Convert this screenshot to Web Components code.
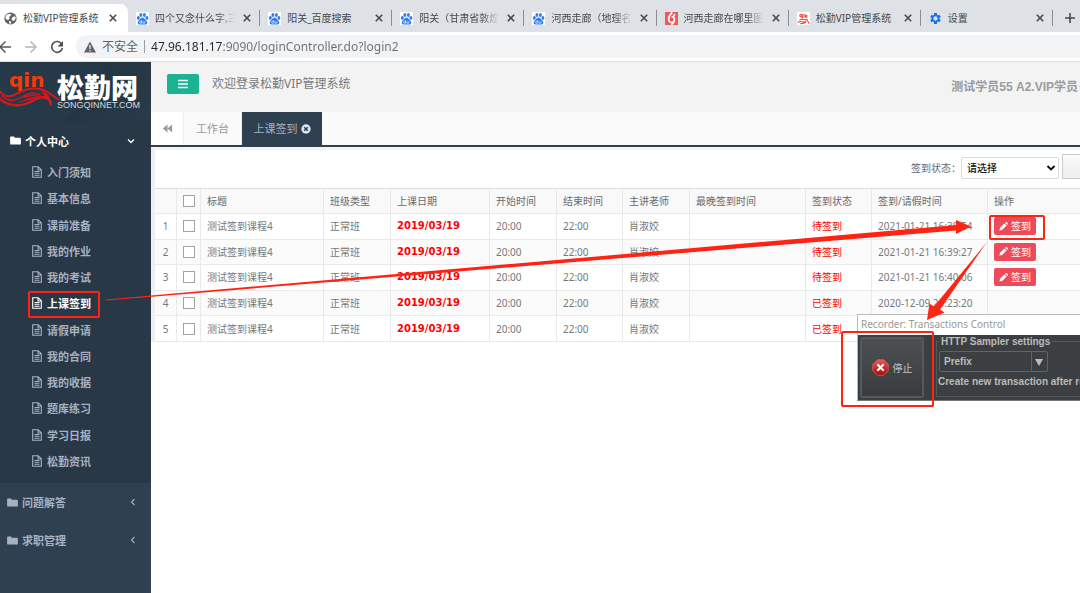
<!DOCTYPE html>
<html lang="zh-CN">
<head>
<meta charset="utf-8">
<title>松勤VIP管理系统</title>
<style>
html,body{margin:0;height:100%}
body{font:10px/16px "Noto Sans","Noto Sans CJK SC",sans-serif;color:#676a6c;background:#fff;overflow:hidden}
</style>
</head>
<body>
<app-shell></app-shell>
<script>
const define=(name,html,setup)=>customElements.define(name,class extends HTMLElement{
  connectedCallback(){
    if(this.shadowRoot)return;
    const root=this.attachShadow({mode:'open'});
    const t=document.createElement('template');
    t.innerHTML=typeof html==='function'?html(this):html;
    root.append(t.content.cloneNode(true));
    if(setup)setup(this,root);
  }
});

const ICONS={
  globe:['0 0 16 16','<circle cx="8" cy="8" r="7.5" fill="#5f6368"/><path d="M3 3.500 7 2l2 1-1 2-2 1 1 2-2 2-2-1-1.500-2zM9.500 7l4-2 1 2.500-1.500 3-2 .5-1.500-1.500zM6 11l3 1-.5 2.500-2-.5z" fill="#fff"/>'],
  paw:['0 0 16 16','<rect width="16" height="16" fill="#fff"/><g fill="#2f7cf6"><ellipse cx="2.900" cy="7.300" rx="1.800" ry="2.300"/><ellipse cx="6" cy="3.600" rx="1.800" ry="2.500"/><ellipse cx="10.300" cy="3.600" rx="1.800" ry="2.500"/><ellipse cx="13.400" cy="7.300" rx="1.800" ry="2.300"/><path d="M8 6.800c-1.800 0-2.400 1.600-3.800 2.900-1.600 1.400-2.400 2.600-1.900 4.200.6 1.900 2.500 1.700 3.700 1.500 1.400-.2 2.600-.2 4 0 1.300.2 3.200.4 3.800-1.500.4-1.600-.4-2.800-2-4.200C10.300 8.400 9.800 6.800 8 6.800z"/></g><path d="M7 10v3.800H5.600a1.100 1.100 0 0 1 0-2.300H7M8.800 11.500v2.300h2v-2.300" fill="none" stroke="#fff" stroke-width=".8"/>'],
  six:['0 0 16 16','<rect width="16" height="16" fill="#ee5a5c"/><path d="M9 .5C6 3 4.500 6 4.500 9a3.600 3.600 0 1 0 3.600-3.400M11.700 9c0 3-1.500 5-4 6.500M12 2.500c-.3 1.500-1 2.500-2 3.500" fill="none" stroke="#fff" stroke-width="2"/>'],
  song:['0 0 16 16','<rect width="16" height="16" fill="#fff"/><g fill="none" stroke="#ee4a34" stroke-width="1.400"><circle cx="5" cy="4.500" r="1.500"/><path d="M6.500 3.500v4.500M8.500 2v5M10.500 7V4h1.500v3M3 10c3-3 6 1 9-1M1 13c4-4 8 2 10-2M4 14.500c3-1 4 0 7-2M12 9l3 5.500"/></g>'],
  gear:['0 0 24 24','<path fill="#1a73e8" d="M19.400 13c.1-.6.1-1.300 0-2l2.300-1.700-2.400-4.100-2.600 1.100a8 8 0 0 0-1.700-1L14.600 2H9.400L9 5.300a8 8 0 0 0-1.700 1L4.700 5.200 2.300 9.300 4.600 11a8 8 0 0 0 0 2l-2.300 1.700 2.400 4.100 2.600-1.100a8 8 0 0 0 1.700 1l.4 3.300h5.200l.4-3.300a8 8 0 0 0 1.700-1l2.600 1.100 2.400-4.100zM12 16a4 4 0 1 1 0-8 4 4 0 0 1 0 8z"/>'],
  close:['0 0 12 12','<path d="m2.800 2.800 6.400 6.400m0-6.400L2.800 9.200" stroke="#45494d" stroke-width="1.600"/>'],
  plus:['0 0 12 12','<path d="M6 1v10M1 6h10" stroke="#45494d" stroke-width="1.600"/>'],
  back:['0 0 14 14','<path d="M13 7H2M7.500 1.500 2 7l5.500 5.500" fill="none" stroke="#55595e" stroke-width="1.500"/>'],
  forward:['0 0 14 14','<path d="M1 7h11M6.500 1.500 12 7l-5.500 5.500" fill="none" stroke="#b4b6b9" stroke-width="1.500"/>'],
  reload:['0 0 14 14','<path d="M11.800 4.200A5.400 5.400 0 1 0 12.400 8" fill="none" stroke="#4d5156" stroke-width="1.600"/><path d="M13 1v5.500H7.500z" fill="#4d5156"/>'],
  warn:['0 0 12 12','<path d="M6 .5 12 11.500H0z" fill="#5f6368"/><path d="M6 4v4M6 9v1.300" stroke="#fff" stroke-width="1.200"/>'],
  folder:['0 0 12 10','<path fill="currentColor" d="M0 1.500Q0 .5 1 .5h3q1 0 1 1V2h5.500Q12 2 12 3.200v5q0 1.300-1.300 1.300H1.300Q0 9.500 0 8.200z"/>'],
  doc:['0 0 10 12','<path d="M.7.7h5.500l3.100 3.100v7.500H.7zM6 .7v3.300h3.300M2.500 5.500h5M2.500 7.300h5M2.500 9.200h5" fill="none" stroke="currentColor" stroke-width="1.100"/>'],
  down:['0 0 8 8','<path d="m1 2.500 3 3 3-3" fill="none" stroke="currentColor" stroke-width="1.300"/>'],
  left:['0 0 8 8','<path d="M5.500 1 2.500 4l3 3" fill="none" stroke="currentColor" stroke-width="1.100"/>'],
  bars:['0 0 12 12','<path d="M1 2.500h10M1 6h10M1 9.500h10" stroke="#fff" stroke-width="1.700"/>'],
  rewind:['0 0 12 10','<path d="M6 .5v9L.8 5zM11.200.5v9L6 5z" fill="#999"/>'],
  dot:['0 0 10 10','<circle cx="5" cy="5" r="4.700" fill="#dfe4ea"/><path d="m3.200 3.200 3.600 3.600m0-3.600L3.200 6.800" stroke="#2f4050" stroke-width="1.500"/>'],
  select:['0 0 10 10','<path d="m1.500 3 3.500 3.500L8.500 3" fill="none" stroke="#111" stroke-width="1.900"/>'],
  pencil:['0 0 10 10','<path d="m.5 9.500.6-3L6 1.600 8.400 4 3.500 8.900zM6.700.9 7.500.3q.5-.4 1 0L9.700 1.500q.4.5 0 1L9.100 3.300z" fill="#fff"/>'],
  stop:['0 0 18 18','<defs><linearGradient id="r" x2="0" y2="1"><stop stop-color="#ee5555"/><stop offset="1" stop-color="#a80808"/></linearGradient></defs><path d="M5.700.8h6.600l4.900 4.900v6.600l-4.900 4.900H5.700L.8 12.300V5.700z" fill="url(#r)" stroke="#d66" stroke-width=".8"/><path d="m5.600 5.600 6.800 6.800m0-6.800-6.800 6.800" stroke="#fff" stroke-width="2.200"/>'],
  logo:['0 0 60 50','<text x="9" y="25" font-family="DejaVu Sans" font-weight="bold" font-size="20" fill="#f23c0a">qin</text><g fill="none" stroke="#d7181b" stroke-linecap="round"><path d="M0 29.500c4 5 8 6 13 4 7-3 11-7 21-7 14 0 16 7 25 11" stroke-width="2"/><path d="M0 37c8 7 19 8 28 4 7-3 10-6 15-6 5 1 8 3 7.500 7.500" stroke-width="2.400"/><path d="M2 34c7 6 13 5 20 1 4-2.500 8-4 13-4M24 35l16-3M25 38l14-4M20 40l14-4" stroke-width="1.300"/><path d="M41 29c5 0 9 4 9.500 12-1.500-3-3-5-5-6" fill="#d7181b" stroke="none"/></g>']
};
define('ui-icon',el=>{
  const [box,body]=ICONS[el.getAttribute('name')];
  const w=el.getAttribute('w')||12,h=el.getAttribute('h')||w;
  return `<style>:host{display:block;flex:none;width:${w}px;height:${h}px}svg{display:block;width:100%;height:100%}</style><svg viewBox="${box}" aria-hidden="true">${body}</svg>`;
});

define('browser-tab',el=>`<style>
:host{display:flex;flex:1 1 132px;box-sizing:border-box;min-width:0;align-items:center;gap:6px;padding:0 7px 0 8px;height:28px;position:relative;color:#45494d}
:host::after{content:"";position:absolute;right:0;top:6px;height:16px;width:1px;background:#8b8e93}
:host([active]){flex:0 1 128px;background:#fff;border-radius:0 8px 0 0;padding:0 9px 0 4px}
:host([active])::after{display:none}
span{flex:1;white-space:nowrap;overflow:hidden;-webkit-mask-image:linear-gradient(90deg,#000 78%,transparent)}
:host([full]) span{-webkit-mask-image:none;overflow:visible}
button{border:0;background:none;padding:0}
</style><ui-icon name="${el.getAttribute('icon')}" w="13"></ui-icon><span><slot></slot></span><button aria-label="关闭标签页"><ui-icon name="close" w="12"></ui-icon></button>`);

define('browser-chrome',`<style>
:host{display:block;background:#fff;border-bottom:1px solid #dfe1e4}
.tabs{display:flex;align-items:end;height:32px;background:#dee1e6}
button{border:0;background:none;padding:0}
.new{align-self:center;margin:4px 4px 0 11px}
.bar{display:flex;align-items:center;height:29px;gap:12px}
.bar>button:first-child{margin-left:-2px}
.url{flex:1;display:flex;align-items:center;gap:6px;height:23px;padding-left:8px;border-radius:12px 0 0 12px;background:#f1f3f4;color:#5f6368;font-size:12px;line-height:18px}
.url i{width:1px;height:13px;background:#9a9da1}
.url span{white-space:nowrap}
input{flex:1;min-width:0;border:0;padding:0;outline:0;font:12px/18px "Noto Sans",sans-serif;height:18px;color:transparent;background:linear-gradient(90deg,#25282c 71px,#6c7075 71px) text;-webkit-background-clip:text}
</style>
<div class="tabs">
<browser-tab active full icon="globe">松勤VIP管理系统</browser-tab>
<browser-tab icon="paw">四个又念什么字,三</browser-tab>
<browser-tab full icon="paw">阳关_百度搜索</browser-tab>
<browser-tab icon="paw">阳关（甘肃省敦煌</browser-tab>
<browser-tab icon="paw">河西走廊（地理名</browser-tab>
<browser-tab icon="six">河西走廊在哪里图</browser-tab>
<browser-tab full icon="song">松勤VIP管理系统</browser-tab>
<browser-tab full icon="gear">设置</browser-tab>
<button class="new" aria-label="新标签页"><ui-icon name="plus" w="12"></ui-icon></button>
</div>
<div class="bar">
<button aria-label="后退"><ui-icon name="back" w="14"></ui-icon></button>
<button aria-label="前进"><ui-icon name="forward" w="14"></ui-icon></button>
<button aria-label="刷新"><ui-icon name="reload" w="14"></ui-icon></button>
<div class="url"><ui-icon name="warn" w="12"></ui-icon><span>不安全</span><i></i><input aria-label="地址" value="47.96.181.17:9090/loginController.do?login2"></div>
</div>`);

define('nav-item',`<style>
:host{display:flex;flex:1;align-items:center;padding-left:32px}
a{display:flex;align-items:center;gap:5px;color:#a7b1c2;text-decoration:none;font:bold 11px/16px "Noto Sans CJK SC",sans-serif}
:host([current]) a{color:#fff}
</style><a href="#"><ui-icon name="doc" w="10" h="12"></ui-icon><slot></slot></a>`);

define('nav-group',el=>`<style>
:host{display:block;color:#a7b1c2}
:host([open]){background:#293846;padding-bottom:9px}
a{display:flex;align-items:center;gap:4px;height:38px;padding:0 14px 0 7px;color:inherit;text-decoration:none;font:bold 11px/16px "Noto Sans CJK SC",sans-serif}
:host([open]) a{color:#fff;height:37px;padding:0 16px 0 10px}
span{flex:1}
.list{display:flex;flex-direction:column;height:315px}
:host(:not([open])) .list{display:none}
</style><a href="#"><ui-icon name="folder" w="11" h="9"></ui-icon><span>${el.getAttribute('label')}</span><ui-icon name="${el.hasAttribute('open')?'down':'left'}" w="8"></ui-icon></a><div class="list"><slot></slot></div>`);

define('side-nav',`<style>
:host{display:block;background:#2f4050}
.logo{display:flex;height:60px;background:linear-gradient(125deg,#263948 55%,#243543 56%,#293b49)}
.name{display:flex;flex-direction:column;color:#fff;padding-top:11px;margin-left:-3px}
b{font:900 27px/27px "Noto Sans CJK SC",sans-serif;white-space:nowrap}
small{font:9px/10px "Liberation Sans",sans-serif;color:#d6dade}
</style>
<div class="logo"><ui-icon name="logo" w="60" h="50"></ui-icon><div class="name"><b>松勤网</b><small>SONGQINNET.COM</small></div></div>
<nav>
<nav-group open label="个人中心">
<nav-item>入门须知</nav-item><nav-item>基本信息</nav-item><nav-item>课前准备</nav-item><nav-item>我的作业</nav-item><nav-item>我的考试</nav-item><nav-item current>上课签到</nav-item><nav-item>请假申请</nav-item><nav-item>我的合同</nav-item><nav-item>我的收据</nav-item><nav-item>题库练习</nav-item><nav-item>学习日报</nav-item><nav-item>松勤资讯</nav-item>
</nav-group>
<nav-group label="问题解答"></nav-group>
<nav-group label="求职管理"></nav-group>
</nav>`);

define('page-header',`<style>
:host{display:flex;height:50px;background:#f3f3f4;padding-left:16px;overflow:hidden}
.menu{margin-top:12px;width:32px;height:20px;border:0;border-radius:2px;background:#1ab394;display:grid;place-items:center;padding:0}
.hi{margin:14px 0 0 13px;flex:1;white-space:nowrap;color:#77797b;font-size:12px}
.user{margin:17px -5px 0 0;display:flex;align-items:center;gap:1px;height:16px;white-space:nowrap;color:#999c9e;text-decoration:none;font:bold 12px/16px "Liberation Sans","Noto Sans CJK SC",sans-serif}
.user i{border:3px solid transparent;border-top-color:#999c9e;border-bottom:0}
</style><button class="menu" aria-label="菜单"><ui-icon name="bars" w="12"></ui-icon></button><span class="hi">欢迎登录松勤VIP管理系统</span><a class="user" href="#">测试学员55 A2.VIP学员<i></i></a>`);

define('page-tabs',`<style>
:host{display:flex;height:33px;background:#fafafa;border-bottom:2px solid #2f4050;font-size:11px}
button,a{box-sizing:border-box;display:flex;align-items:center;justify-content:center;gap:3px;border:0;border-right:1px solid #eee;padding:0;color:#999;text-decoration:none;white-space:nowrap}
button{width:33px;background:#fff}
a{width:58px}
a.on{width:80px;background:#2f4050;color:#a7b1c2;border:0}
</style><button aria-label="向左滚动"><ui-icon name="rewind" w="11" h="9"></ui-icon></button><a href="#">工作台</a><a class="on" href="#">上课签到<ui-icon name="dot" w="10"></ui-icon></a>`);

define('filter-bar',`<style>
:host{display:flex;align-items:start;justify-content:flex-end;height:38px;background:#fff}
label{padding-top:10px}
.pick{position:relative;margin:7px 3px 0 0}
.pick ui-icon{position:absolute;right:3px;top:6px;pointer-events:none}
select{appearance:none;box-sizing:border-box;width:98px;height:22px;padding:0 5px;border:1px solid #ddd;border-radius:2px;background:#fff;color:#111;font:500 10px/16px "Noto Sans CJK SC",sans-serif}
.search{width:18px;height:25px;margin-top:4px;padding:0;border:1px solid #ccc;border-right:0;background:linear-gradient(#fafafa,#eee)}
</style><label for="state">签到状态：</label><div class="pick"><select id="state"><option>请选择</option></select><ui-icon name="select" w="10"></ui-icon></div><button class="search" aria-label="查询"></button>`);

define('sign-button',`<style>:host{display:block}button{display:flex;align-items:center;justify-content:center;gap:3px;width:42px;height:18px;border:0;border-radius:2px;background:#ed4a5c;color:#fff;padding:0;font:10px/16px "Noto Sans CJK SC",sans-serif}</style><button><ui-icon name="pencil" w="9"></ui-icon><slot></slot></button>`);

const ROWS=[['待签到','2021-01-21 16:38:54',1],['待签到','2021-01-21 16:39:27',1],['待签到','2021-01-21 16:40:06',1],['已签到','2020-12-09 20:23:20',0],['已签到','2020-12-09 20:23:20',0]];
define('sign-table',`<style>
:host{display:block}
table{width:100%;height:154px;table-layout:fixed;border-collapse:separate;border-spacing:0;border-top:1px solid #ddd;line-height:16px}
th,td{height:25px;box-sizing:border-box;padding:0 6px;text-align:left;font-weight:normal;border-right:1px solid #e9e9e9;border-bottom:1px solid #e9e9e9;white-space:nowrap;overflow:hidden;color:#76797b}
th{background:#f9f9f9;color:#676a6c}
th:last-child,td:last-child{border-right:0}
tbody tr:nth-child(even){background:#fbfbfb}
td:first-child{padding:0;text-align:center}
input{appearance:none;display:block;box-sizing:border-box;width:12px;height:12px;margin:0;border:1px solid #a2a2a2;background:#fff}
td.date{color:#f00;font:bold 10px/16px "DejaVu Sans",sans-serif}
td.state{color:#f00}
</style><table>
<colgroup>${[22,24,123,67,99,67,66,67,116,66,116].map(w=>`<col style="width:${w}px">`).join('')}<col></colgroup>
<thead><tr><th></th><th><input type="checkbox" aria-label="全选"></th>${['标题','班级类型','上课日期','开始时间','结束时间','主讲老师','最晚签到时间','签到状态','签到/请假时间','操作'].map(h=>`<th>${h}</th>`).join('')}</tr></thead>
<tbody>${ROWS.map((r,i)=>`<tr><td>${i+1}</td><td><input type="checkbox" aria-label="选择第${i+1}行"></td><td>测试签到课程4</td><td>正常班</td><td class="date">2019/03/19</td><td>20:00</td><td>22:00</td><td>肖淑姣</td><td></td><td class="state">${r[0]}</td><td>${r[1]}</td><td>${r[2]?'<sign-button>签到</sign-button>':''}</td></tr>`).join('')}</tbody></table>`);

define('recorder-window',`<style>
:host{display:block;box-sizing:border-box;border:1px solid #b9b9b9;border-right:0;border-bottom-color:#777;overflow:hidden;background:#3c3f41;white-space:nowrap}
header{height:20px;padding-left:3px;background:#fff;color:#999;font:10px/18px "Noto Sans",sans-serif}
.body{display:flex;height:65px;color:#bbb;font:bold 10px/13px "Liberation Sans",sans-serif}
.stop{display:flex;align-items:center;justify-content:center;gap:4px;box-sizing:border-box;width:64px;height:61px;margin:2px 12px 0 2px;border:2px solid #55595b;border-radius:3px;background:linear-gradient(#4c5052,#393c3e);color:#c4c4c4;font:10px/16px "Noto Sans CJK SC",sans-serif;padding:0}
fieldset{flex:1;min-width:0;height:62px;box-sizing:border-box;margin:0;padding:3px 0 0 3px;border:1px solid #55595b;border-right:0}
legend{padding:0 2px;margin-left:-1px}
.combo{position:relative;width:109px;height:21px;margin-left:-1px}
select{appearance:none;box-sizing:border-box;width:109px;height:21px;padding:0 4px;border:1px solid #616466;border-radius:2px;background:linear-gradient(90deg,transparent 91px,#616466 91px 92px,transparent 92px) #3c3f41;color:#bbb;font:inherit}
.combo i{position:absolute;right:5px;top:8px;border:4px solid transparent;border-top:7px solid #bbb;border-bottom:0;pointer-events:none}
p{margin:3px 0 0 -2px}
</style><header>Recorder: Transactions Control</header><div class="body"><button class="stop"><ui-icon name="stop" w="17"></ui-icon>停止</button><fieldset><legend>HTTP Sampler settings</legend><div class="combo"><select aria-label="HTTP Sampler settings"><option>Prefix</option></select><i></i></div><p>Create new transaction after request</p></fieldset></div>`);

define('mark-layer',`<style>:host{display:block;pointer-events:none}svg{display:block}</style>
<svg width="1080" height="593" viewBox="0 0 1080 593"><g fill="none" stroke="#ff2314" stroke-width="2"><rect x="29" y="292" width="70" height="25" rx="1"/><rect x="990" y="216" width="54" height="23" rx="1"/><rect x="842" y="332" width="91" height="74" rx="1"/></g><path fill="#ff2314" d="M106 299.500 956 225V220L971 226.500 956 234V230.500L106 300.500z"/><path fill="#ff2314" d="m987 242-53 64.500-4.500-3-2.500 16.500 17.500-7.500-4.500-3z"/></svg>`);

define('app-shell',`<style>
:host{display:flex;flex-direction:column;min-height:100vh;position:relative;overflow:hidden}
.main{flex:1;display:grid;grid-template-columns:151px minmax(0,1fr)}
.content{border-left:4px solid #efeff1;border-top:3px solid #f3f3f3}
recorder-window{position:absolute;left:857px;right:0;top:314px;height:87px}
mark-layer{position:absolute;left:0;top:0}
</style>
<browser-chrome></browser-chrome>
<div class="main"><side-nav></side-nav><main><page-header></page-header><page-tabs></page-tabs><div class="content"><filter-bar></filter-bar><sign-table></sign-table></div></main></div>
<recorder-window></recorder-window><mark-layer></mark-layer>`);
</script>
</body>
</html>
